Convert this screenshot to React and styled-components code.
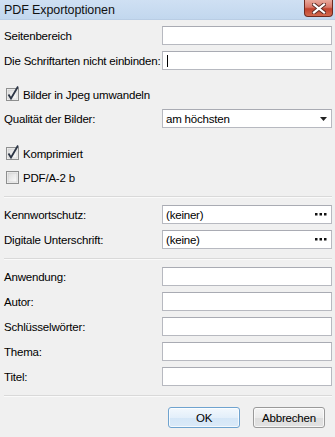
import React from "react";
import styled, { createGlobalStyle } from "styled-components";

const GlobalStyle = createGlobalStyle`
  html, body {
    margin: 0;
    padding: 0;
    background: #f0f0f0;
  }
  body {
    font-family: "Liberation Sans", Arial, sans-serif;
    font-size: 11.5px;
    letter-spacing: -0.2px;
    color: #000;
  }
`;

const Dialog = styled.div`
  width: 335px;
  height: 437px;
  background: #f0f0f0;
  display: flex;
  flex-direction: column;
  overflow: hidden;
`;

const TitleBar = styled.div`
  height: 20px;
  display: flex;
  align-items: center;
  justify-content: space-between;
  padding: 0 2px 0 4px;
  background: linear-gradient(#cfe0f3, #c2d7ee);
  border-bottom: 1px solid #b9cde4;
  box-sizing: border-box;
`;

const Title = styled.span`
  font-size: 12.5px;
  letter-spacing: -0.1px;
  color: #111;
`;

const CloseButton = styled.div`
  width: 29px;
  height: 17px;
  margin-top: -2px;
  border-radius: 0 0 4px 4px;
  border: 1px solid #6d2a20;
  border-top: none;
  box-sizing: border-box;
  background: linear-gradient(#e9a99c 0%, #d8786a 45%, #c0412c 55%, #d26a4f 100%);
  display: flex;
  align-items: center;
  justify-content: center;
`;

const Body = styled.div`
  flex: 1;
  padding: 6px 3px 0 4px;
  display: flex;
  flex-direction: column;
`;

const Row = styled.div`
  display: grid;
  grid-template-columns: 158px 170px;
  align-items: center;
  height: 19px;
  margin-top: ${(p) => p.$gap || 0}px;
`;

const CheckRow = styled.label`
  display: flex;
  align-items: center;
  gap: 4px;
  height: 19px;
  padding-left: 2px;
  margin-top: ${(p) => p.$gap || 0}px;
`;

const Label = styled.span`
  white-space: nowrap;
`;

const Field = styled.div`
  height: 19px;
  box-sizing: border-box;
  background: #fff;
  border: 1px solid #b7b9c0;
  border-top-color: #a9abb3;
  display: flex;
  align-items: center;
  justify-content: space-between;
  padding: 0 4px 0 3px;
`;

const Caret = styled.span`
  width: 1px;
  height: 12px;
  background: #000;
  margin-left: 1px;
`;

const Separator = styled.div`
  height: 1px;
  background: #d9d9d9;
  border-bottom: 1px solid #fafafa;
  margin-top: ${(p) => p.$gap || 0}px;
`;

const Footer = styled.div`
  display: flex;
  justify-content: flex-end;
  gap: 13px;
  padding-right: 7px;
  margin-top: 10px;
`;

const Button = styled.div`
  width: 72px;
  height: 21px;
  box-sizing: border-box;
  border-radius: 3px;
  border: 1px solid ${(p) => (p.$default ? "#6fa3cf" : "#9a9a9a")};
  background: ${(p) =>
    p.$default
      ? "linear-gradient(#f2f8fd 0%, #e3effa 50%, #d4e6f7 51%, #dbeaf8 100%)"
      : "linear-gradient(#f4f4f4 0%, #ebebeb 50%, #dddddd 51%, #e2e2e2 100%)"};
  box-shadow: inset 0 0 0 1px rgba(255, 255, 255, 0.7);
  display: flex;
  align-items: center;
  justify-content: center;
`;

const CloseIcon = () => (
  <svg width="14" height="11" viewBox="0 0 14 11">
    <path d="M2 1.5 L12 9.5 M12 1.5 L2 9.5" stroke="#5a2a24" strokeWidth="4" strokeLinecap="square" />
    <path d="M2 1.5 L12 9.5 M12 1.5 L2 9.5" stroke="#fff" strokeWidth="2.2" strokeLinecap="square" />
  </svg>
);

const CheckBox = ({ checked }) => (
  <svg width="13" height="13" viewBox="0 0 13 13" style={{ overflow: "visible" }}>
    <defs>
      <linearGradient id="cbg" x1="0" y1="0" x2="1" y2="1">
        <stop offset="0" stopColor="#dcdcdc" />
        <stop offset="1" stopColor="#fbfbfb" />
      </linearGradient>
    </defs>
    <rect x="0.5" y="0.5" width="12" height="12" fill="#f4f4f4" stroke="#8e8f8f" />
    <rect x="2" y="2" width="9" height="9" fill="url(#cbg)" stroke="#c9c9c9" strokeWidth="0.6" />
    {checked && (
      <path d="M2.5 6.5 L5 10.5 L12 -1.5" fill="none" stroke="#2c3545" strokeWidth="1.8" />
    )}
  </svg>
);

const Arrow = () => (
  <svg width="7" height="4" viewBox="0 0 7 4">
    <path d="M0 0 H7 L3.5 4 Z" fill="#222" />
  </svg>
);

const Dots = () => (
  <svg width="12" height="3" viewBox="0 0 12 3">
    <rect x="0" y="0" width="2.5" height="2.5" fill="#111" />
    <rect x="4.5" y="0" width="2.5" height="2.5" fill="#111" />
    <rect x="9" y="0" width="2.5" height="2.5" fill="#111" />
  </svg>
);

const TextRow = ({ label, gap, children }) => (
  <Row $gap={gap}>
    <Label>{label}</Label>
    <Field>{children}</Field>
  </Row>
);

export default function App() {
  return (
    <Dialog>
      <GlobalStyle />
      <TitleBar>
        <Title>PDF Exportoptionen</Title>
        <CloseButton>
          <CloseIcon />
        </CloseButton>
      </TitleBar>
      <Body>
        <TextRow label="Seitenbereich" />
        <TextRow label="Die Schriftarten nicht einbinden:" gap={6}>
          <Caret />
        </TextRow>

        <CheckRow $gap={15}>
          <CheckBox checked />
          <Label>Bilder in Jpeg umwandeln</Label>
        </CheckRow>
        <TextRow label="Qualität der Bilder:" gap={5}>
          <span>am höchsten</span>
          <Arrow />
        </TextRow>

        <CheckRow $gap={16}>
          <CheckBox checked />
          <Label>Komprimiert</Label>
        </CheckRow>
        <CheckRow $gap={5}>
          <CheckBox />
          <Label>PDF/A-2 b</Label>
        </CheckRow>

        <Separator $gap={9} />

        <TextRow label="Kennwortschutz:" gap={7}>
          <span>(keiner)</span>
          <Dots />
        </TextRow>
        <TextRow label="Digitale Unterschrift:" gap={6}>
          <span>(keine)</span>
          <Dots />
        </TextRow>

        <Separator $gap={9} />

        <TextRow label="Anwendung:" gap={7} />
        <TextRow label="Autor:" gap={6} />
        <TextRow label="Schlüsselwörter:" gap={6} />
        <TextRow label="Thema:" gap={6} />
        <TextRow label="Titel:" gap={6} />

        <Separator $gap={9} />

        <Footer>
          <Button $default>OK</Button>
          <Button>Abbrechen</Button>
        </Footer>
      </Body>
    </Dialog>
  );
}
